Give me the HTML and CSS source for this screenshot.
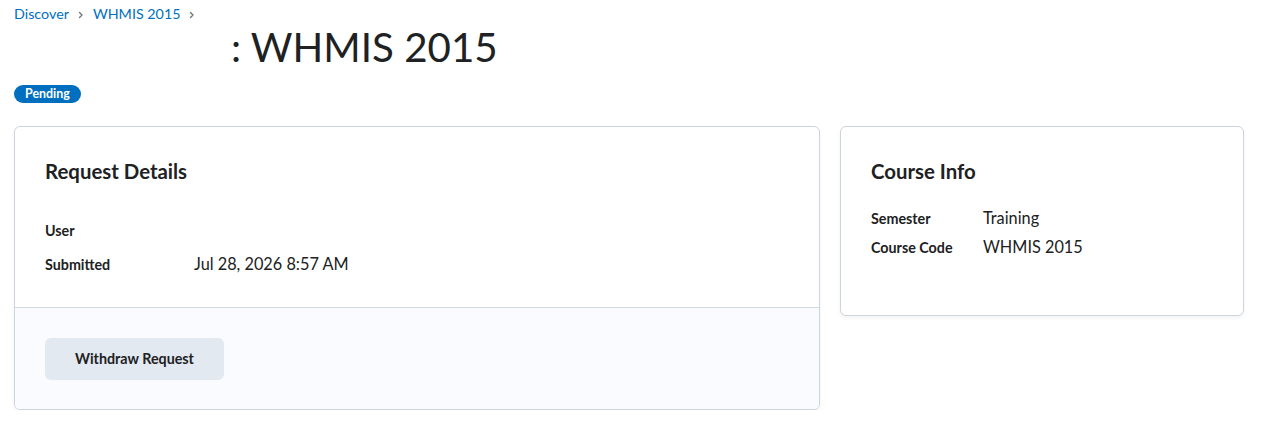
FILE: index.html
```html
<!DOCTYPE html>
<html lang="en">
<head>
    <meta charset="UTF-8">
    <meta name="viewport" content="width=device-width, initial-scale=1.0">
    <title>Enrollment Request: WHMIS 2015</title>
    <link rel="stylesheet" href="styles.css">
</head>
<body>

<div class="page">
    <nav class="breadcrumbs">
        <a href="#">Discover</a>
        <svg class="crumb-sep" width="6" height="8" viewBox="0 0 6 8"><polyline points="1.5,1.5 4,4 1.5,6.5" fill="none" stroke="#6e7477" stroke-width="1.4" stroke-linecap="round" stroke-linejoin="round"/></svg>
        <a href="#">WHMIS 2015</a>
        <svg class="crumb-sep" width="6" height="8" viewBox="0 0 6 8"><polyline points="1.5,1.5 4,4 1.5,6.5" fill="none" stroke="#6e7477" stroke-width="1.4" stroke-linecap="round" stroke-linejoin="round"/></svg>
    </nav>

    <h1 class="page-title">: WHMIS 2015</h1>
    <span class="status-badge">Pending</span>

    <div class="cards">
        <section class="card">
            <div class="card-body request-body">
                <h2>Request Details</h2>
                <dl class="details request-details">
                    <div class="detail-row">
                        <dt>User</dt>
                        <dd></dd>
                    </div>
                    <div class="detail-row">
                        <dt>Submitted</dt>
                        <dd>Jul 28, 2026 8:57 AM</dd>
                    </div>
                </dl>
            </div>
            <div class="card-footer">
                <button class="btn-secondary">Withdraw Request</button>
            </div>
        </section>

        <section class="card card-side">
            <div class="card-body info-body">
                <h2>Course Info</h2>
                <dl class="details course-details">
                    <div class="detail-row">
                        <dt>Semester</dt>
                        <dd>Training</dd>
                    </div>
                    <div class="detail-row">
                        <dt>Course Code</dt>
                        <dd>WHMIS 2015</dd>
                    </div>
                </dl>
            </div>
        </section>
    </div>
</div>

</body>
</html>
```

FILE: styles.css
```css
body {
    margin: 0;
    font-family: Lato, "Open Sans", sans-serif;
    color: #202122;
    background-color: #ffffff;
}
.page {
    padding: 0 14px;
}
.breadcrumbs {
    display: flex;
    align-items: center;
    gap: 9px;
    padding-top: 5px;
    font-size: 14.3px;
    line-height: 17px;
}
.breadcrumbs a {
    color: #006fbf;
    text-decoration: none;
}
.crumb-sep {
    margin-top: 3px;
}
.page-title {
    margin: 0;
    padding-left: 217px;
    font-size: 40.3px;
    font-weight: 400;
    line-height: 50px;
    color: #202122;
}
.status-badge {
    display: inline-block;
    margin-top: 13px;
    padding: 0 11px;
    height: 18px;
    line-height: 18px;
    font-size: 12.4px;
    font-weight: 700;
    color: #ffffff;
    background-color: #006fbf;
    border-radius: 9px;
}
.cards {
    display: grid;
    grid-template-columns: 806px 404px;
    gap: 20px;
    align-items: start;
    margin-top: 23px;
}
.card {
    border: 1px solid #cdd5dc;
    border-radius: 6px;
    background-color: #ffffff;
    box-shadow: 0 2px 4px rgba(0, 0, 0, 0.05);
    overflow: hidden;
}
.card-body {
    padding: 32px 30px 31px;
}
.info-body {
    padding-bottom: 56px;
}
.card-body h2 {
    margin: 0;
    font-size: 20.4px;
    font-weight: 700;
    line-height: 24px;
}
.details {
    margin: 36px 0 0;
    display: flex;
    flex-direction: column;
    gap: 9px;
}
.course-details {
    margin-top: 23px;
    gap: 5px;
}
.detail-row {
    display: flex;
    align-items: baseline;
    line-height: 24px;
    height: 24px;
}
.detail-row dt {
    width: 149px;
    font-size: 14.3px;
    font-weight: 700;
}
.course-details dt {
    width: 112px;
}
.detail-row dd {
    margin: 0;
    font-size: 16.3px;
}
.card-footer {
    border-top: 1px solid #d3d9e3;
    background-color: #f9fbff;
    padding: 30px 30px 29px;
}
.btn-secondary {
    height: 42px;
    padding: 0 30px 2px;
    font-family: inherit;
    font-size: 14.3px;
    font-weight: 700;
    color: #202122;
    background-color: #e3e9f1;
    border: none;
    border-radius: 6px;
    cursor: pointer;
}
```
